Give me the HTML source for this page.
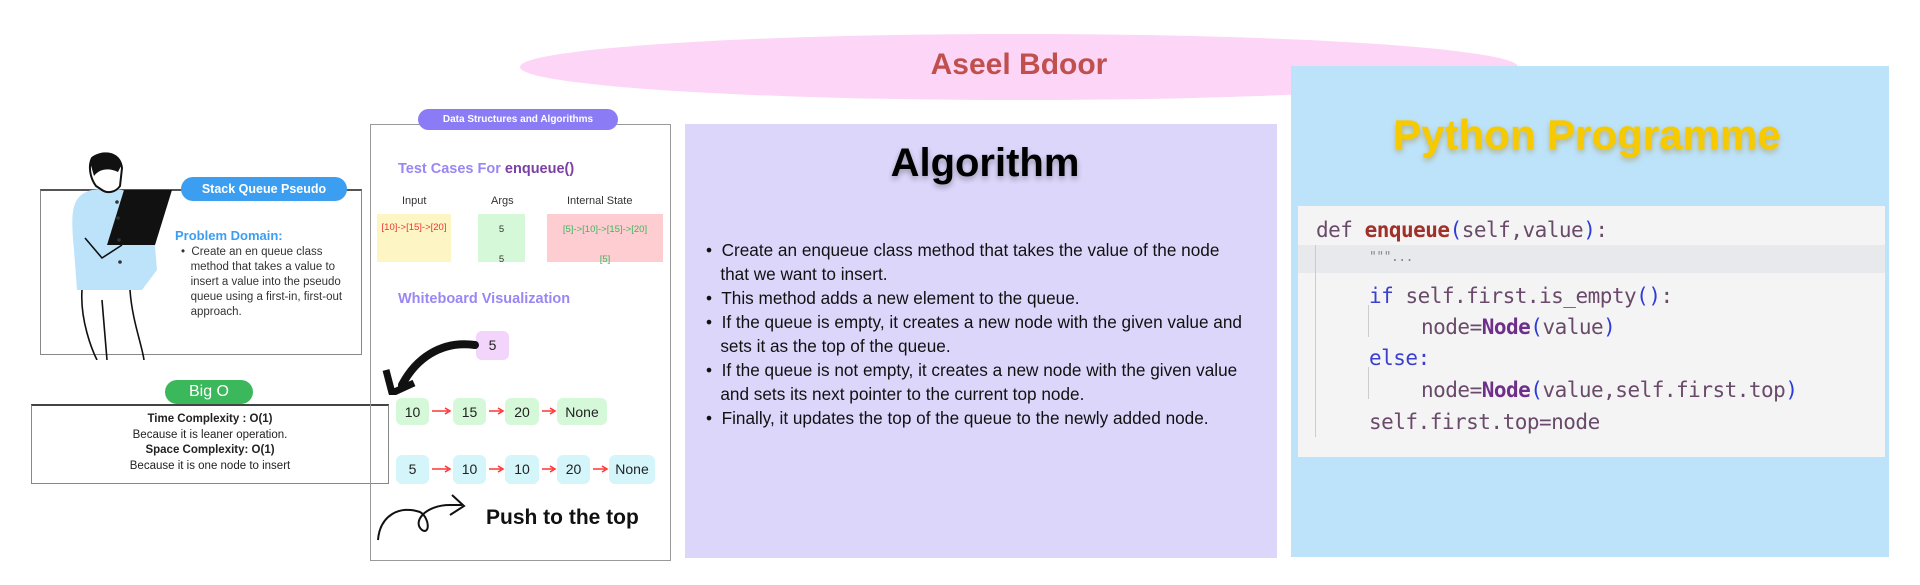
<!DOCTYPE html>
<html><head><meta charset="utf-8"><style>
*{margin:0;padding:0;box-sizing:border-box}
body{width:1920px;height:585px;background:#fff;position:relative;overflow:hidden;font-family:"Liberation Sans",sans-serif}
.a{position:absolute}
.c{text-align:center}
.pill{position:absolute;border-radius:12px;color:#fff;font-weight:bold;text-align:center}
.nd{position:absolute;border-radius:6px;text-align:center;font-size:14px;color:#222;line-height:28px}
.g{background:#d5f8d9}.cy{background:#d4f6fb}
.code{font-family:"DejaVu Sans Mono","Liberation Mono",monospace;font-size:21px;position:absolute;left:1316px;white-space:pre;color:#6a4a6a;letter-spacing:-0.5px}
</style></head><body>

<div class="a" style="left:520px;top:34px;width:998px;height:66px;border-radius:50%;background:#fdd5f6"></div>
<div class="a c" style="left:520px;top:48px;width:998px;font-size:30px;font-weight:bold;color:#c0504d">Aseel Bdoor</div>

<!-- left card -->
<div class="a" style="left:40px;top:189px;width:322px;height:166px;border:1px solid #888;border-top:2px solid #555"></div>
<svg class="a" style="left:52px;top:150px" width="125" height="210" viewBox="0 0 125 210">
<path d="M40 40 C20 45 18 60 22 100 L25 140 L90 140 L105 120 L100 60 C90 45 70 38 55 38Z" fill="#bde3fb"/>
<path d="M40 8 C50 0 68 2 70 18 L68 36 C64 42 56 44 50 40 L44 36 C38 28 36 16 40 8Z" fill="#fff" stroke="#111" stroke-width="2"/>
<path d="M38 12 C42 0 66 -2 70 14 L66 22 C58 18 48 18 42 26Z" fill="#111"/>
<path d="M72 40 L120 40 L103 95 L55 95Z" fill="#111"/>
<path d="M33 88 L50 108 L70 95 M30 140 C28 170 40 200 45 210 M78 140 C80 170 90 195 92 210 M50 150 L55 210" stroke="#111" stroke-width="1.6" fill="none"/>
<circle cx="65" cy="52" r="1.8" fill="#333"/><circle cx="66" cy="68" r="1.8" fill="#333"/><circle cx="67" cy="90" r="1.8" fill="#333"/><circle cx="68" cy="112" r="1.8" fill="#333"/>
</svg>
<div class="pill" style="left:181px;top:177px;width:166px;height:24px;background:#3b9ef0;font-size:12.5px;line-height:24px">Stack Queue Pseudo</div>
<div class="a" style="left:175px;top:228px;font-size:13px;font-weight:bold;color:#3b9ef0">Problem Domain:</div>
<div class="a" style="left:181px;top:245px;width:180px;font-size:11.5px;line-height:15px;color:#333">•&nbsp; Create an en queue class<br>&nbsp;&nbsp;&nbsp;method that takes a value to<br>&nbsp;&nbsp;&nbsp;insert a value into the pseudo<br>&nbsp;&nbsp;&nbsp;queue using a first-in, first-out<br>&nbsp;&nbsp;&nbsp;approach.</div>

<div class="a" style="left:31px;top:404px;width:358px;height:80px;border:1px solid #888;border-top:2px solid #444"></div>
<div class="pill" style="left:165px;top:380px;width:88px;height:24px;background:#3ab85b;font-size:16px;line-height:24px;font-weight:normal">Big O</div>
<div class="a c" style="left:31px;top:412px;width:358px;font-size:11.5px;line-height:15.5px;color:#222"><b>Time Complexity : O(1)</b><br>Because it is leaner operation.<br><b>Space Complexity: O(1)</b><br>Because it is one node to insert</div>

<!-- middle card -->
<div class="a" style="left:370px;top:124px;width:301px;height:437px;border:1px solid #999"></div>
<div class="pill" style="left:418px;top:109px;width:200px;height:21px;background:#8b7cf6;font-size:10px;line-height:21px">Data Structures and Algorithms</div>
<div class="a" style="left:398px;top:161px;font-size:14.5px;font-weight:bold;color:#9a86f5">Test Cases For <span style="color:#7b3fa5">enqueue()</span></div>
<div class="a" style="left:402px;top:195px;font-size:11px;color:#333">Input</div>
<div class="a" style="left:491px;top:195px;font-size:11px;color:#333">Args</div>
<div class="a" style="left:567px;top:195px;font-size:11px;color:#333">Internal State</div>
<div class="a" style="left:377px;top:214px;width:74px;height:48px;background:#fef5c5;font-size:9.5px;color:#e33;text-align:center;padding-top:8px">[10]-&gt;[15]-&gt;[20]</div>
<div class="a" style="left:478px;top:214px;width:47px;height:48px;background:#d5f8d9;font-size:9.5px;color:#333;text-align:center;padding-top:8px;line-height:15px">5<br><br>5</div>
<div class="a" style="left:547px;top:214px;width:116px;height:48px;background:#fdcdd1;font-size:9.5px;color:#3ab85b;text-align:center;padding-top:8px;line-height:15px">[5]-&gt;[10]-&gt;[15]-&gt;[20]<br><br>[5]</div>
<div class="a" style="left:398px;top:291px;font-size:14.5px;font-weight:bold;color:#9a86f5">Whiteboard Visualization</div>
<div class="nd" style="left:476px;top:331px;width:33px;height:29px;background:#f3d4fb">5</div>
<svg class="a" style="left:380px;top:335px" width="100" height="60"><path d="M95 10 C60 5 35 25 22 50" stroke="#111" stroke-width="8" fill="none" stroke-linecap="round"/><path d="M6 35 L12 58 L34 48" stroke="#111" stroke-width="7" fill="none" stroke-linejoin="round"/></svg>
<div class="nd g" style="left:396px;top:398px;width:33px;height:27px">10</div>
<div class="nd g" style="left:453px;top:398px;width:33px;height:27px">15</div>
<div class="nd g" style="left:505px;top:398px;width:34px;height:27px">20</div>
<div class="nd g" style="left:557px;top:398px;width:50px;height:27px">None</div>
<div class="nd cy" style="left:396px;top:455px;width:33px;height:29px">5</div>
<div class="nd cy" style="left:453px;top:455px;width:33px;height:29px">10</div>
<div class="nd cy" style="left:505px;top:455px;width:34px;height:29px">10</div>
<div class="nd cy" style="left:557px;top:455px;width:33px;height:29px">20</div>
<div class="nd cy" style="left:609px;top:455px;width:46px;height:29px">None</div>
<svg class="a" style="left:0;top:0" width="680" height="585">
<g stroke="#f33" stroke-width="1.5" fill="none">
<path d="M432 411 H448 M489 411 H501 M542 411 H553 M432 469 H448 M489 469 H501 M542 469 H553 M593 469 H605"/>
<path d="M445 408 L450 411 L445 414 M498 408 L503 411 L498 414 M550 408 L555 411 L550 414 M445 466 L450 469 L445 472 M498 466 L503 469 L498 472 M550 466 L555 469 L550 472 M602 466 L607 469 L602 472"/>
</g>
<path d="M378 540 C380 515 400 505 420 512 C430 518 430 535 422 530 C412 522 425 505 450 505 L462 505 M452 495 L464 506 L450 515" stroke="#111" stroke-width="2" fill="none"/>
</svg>
<div class="a" style="left:486px;top:506px;font-size:21px;font-weight:bold;color:#111">Push to the top</div>

<!-- algorithm -->
<div class="a" style="left:685px;top:124px;width:592px;height:434px;background:#ddd6fb"></div>
<div class="a c" style="left:685px;top:141px;width:600px;font-size:40px;font-weight:bold;color:#000;text-shadow:0 3px 6px rgba(0,0,0,.3)">Algorithm</div>
<div class="a" style="left:706px;top:238px;width:570px;font-size:17.2px;line-height:24px;color:#111">
<div>•&nbsp; Create an enqueue class method that takes the value of the node<br>&nbsp;&nbsp;&nbsp;that we want to insert.</div>
<div>•&nbsp; This method adds a new element to the queue.</div>
<div>•&nbsp; If the queue is empty, it creates a new node with the given value and<br>&nbsp;&nbsp;&nbsp;sets it as the top of the queue.</div>
<div>•&nbsp; If the queue is not empty, it creates a new node with the given value<br>&nbsp;&nbsp;&nbsp;and sets its next pointer to the current top node.</div>
<div>•&nbsp; Finally, it updates the top of the queue to the newly added node.</div>
</div>

<!-- python -->
<div class="a" style="left:1291px;top:66px;width:598px;height:491px;background:#bde3fb"></div>
<div class="a c" style="left:1291px;top:111px;width:592px;font-size:42px;font-weight:bold;color:#f7ca00;text-shadow:0 3px 6px rgba(160,120,0,.45)">Python Programme</div>
<div class="a" style="left:1298px;top:206px;width:587px;height:251px;background:#f4f4f4"></div>
<div class="a" style="left:1298px;top:245px;width:587px;height:28px;background:#e8e9ec"></div>
<div class="a" style="left:1315px;top:245px;width:1px;height:192px;background:#ccc"></div>
<div class="a" style="left:1368px;top:305px;width:1px;height:32px;background:#ccc"></div>
<div class="a" style="left:1368px;top:367px;width:1px;height:32px;background:#ccc"></div>
<div class="code" style="top:218px;left:1316px">def <b style="color:#a0302a">enqueue</b><span style="color:#2e3bd9">(</span>self,value<span style="color:#2e3bd9">)</span>:</div>
<div class="code" style="top:250px;left:1369px;font-size:13px;color:#888">"""...</div>
<div class="code" style="top:284px;left:1369px"><span style="color:#3b3fd0">if</span> self.first.is_empty<span style="color:#2e3bd9">()</span>:</div>
<div class="code" style="top:315px;left:1421px">node=<b style="color:#6e2f8a">Node</b><span style="color:#2e3bd9">(</span>value<span style="color:#2e3bd9">)</span></div>
<div class="code" style="top:346px;left:1369px;color:#3b3fd0">else:</div>
<div class="code" style="top:378px;left:1421px">node=<b style="color:#6e2f8a">Node</b><span style="color:#2e3bd9">(</span>value,self.first.top<span style="color:#2e3bd9">)</span></div>
<div class="code" style="top:410px;left:1369px">self.first.top=node</div>
</body></html>
